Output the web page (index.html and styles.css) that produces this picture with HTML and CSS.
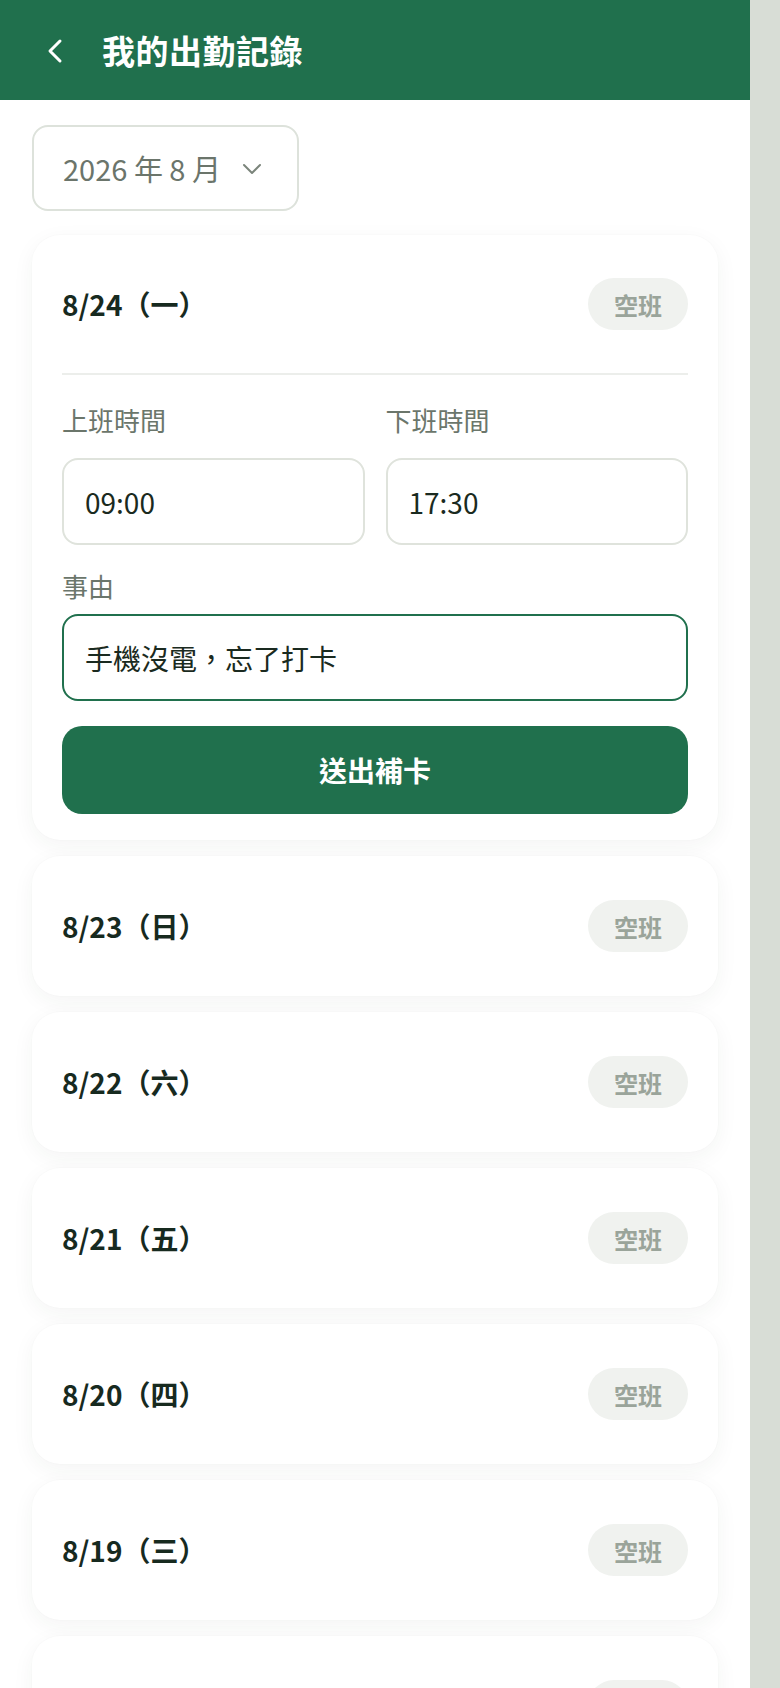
FILE: index.html
```html
<!DOCTYPE html>
<html lang="zh-Hant">
<head>
<meta charset="utf-8">
<title>我的出勤記錄</title>
<link rel="stylesheet" href="styles.css">
</head>
<body>
<div class="app">
  <header class="topbar">
    <button class="back" aria-label="返回">
      <svg width="18" height="26" viewBox="0 0 18 26"><polyline points="14,3 4,13 14,23" fill="none" stroke="#fff" stroke-width="3" stroke-linecap="round" stroke-linejoin="round"/></svg>
    </button>
    <h1 class="title">我的出勤記錄</h1>
  </header>

  <main class="content">
    <div class="month-select">
      <span>2026 年 8 月</span>
      <svg class="caret" width="20" height="12" viewBox="0 0 20 12"><polyline points="2,2 10,10 18,2" fill="none" stroke="#7b857b" stroke-width="2" stroke-linecap="round" stroke-linejoin="round"/></svg>
    </div>

    <section class="card open">
      <div class="card-head">
        <span class="date">8/24（一）</span>
        <span class="pill">空班</span>
      </div>
      <div class="card-body">
        <div class="time-grid">
          <div class="field">
            <div class="label time-label">上班時間</div>
            <div class="input">09:00</div>
          </div>
          <div class="field">
            <div class="label time-label">下班時間</div>
            <div class="input">17:30</div>
          </div>
        </div>
        <div class="label reason-label">事由</div>
        <div class="input focused">手機沒電，忘了打卡</div>
        <button class="submit">送出補卡</button>
      </div>
    </section>

    <section class="card"><div class="card-head"><span class="date">8/23（日）</span><span class="pill">空班</span></div></section>
    <section class="card"><div class="card-head"><span class="date">8/22（六）</span><span class="pill">空班</span></div></section>
    <section class="card"><div class="card-head"><span class="date">8/21（五）</span><span class="pill">空班</span></div></section>
    <section class="card"><div class="card-head"><span class="date">8/20（四）</span><span class="pill">空班</span></div></section>
    <section class="card"><div class="card-head"><span class="date">8/19（三）</span><span class="pill">空班</span></div></section>
    <section class="card"><div class="card-head"><span class="date">8/18（二）</span><span class="pill">空班</span></div></section>
    <section class="card"><div class="card-head"><span class="date">8/17（一）</span><span class="pill">空班</span></div></section>
  </main>
</div>
</body>
</html>
```

FILE: styles.css
```css
* { box-sizing: border-box; }

html, body {
  margin: 0;
  padding: 0;
}

body {
  background: #d8ddd6;
  font-family: "Noto Sans CJK TC", "Noto Sans", sans-serif;
  color: #1a2b20;
}

.app {
  width: 750px;
  min-height: 1688px;
  background: #ffffff;
}

.topbar {
  height: 100px;
  background: #20704d;
  display: flex;
  align-items: center;
  padding-left: 46px;
}

.back {
  background: none;
  border: 0;
  padding: 0;
  width: 18px;
  height: 26px;
  display: flex;
  margin-right: 38px;
  margin-top: 1px;
}

.title {
  margin: 0;
  color: #ffffff;
  font-size: 33px;
  font-weight: 700;
  line-height: 1;
  letter-spacing: 0.5px;
}

.content {
  padding: 25px 32px 0;
}

.month-select {
  width: 267px;
  height: 86px;
  border: 2px solid #dde2db;
  border-radius: 16px;
  display: flex;
  align-items: center;
  justify-content: space-between;
  padding: 0 35px 0 29px;
  color: #6b756b;
  font-size: 29px;
  margin-bottom: 24px;
}

.caret { margin-top: 2px; }

.card {
  background: #ffffff;
  border-radius: 28px;
  box-shadow: 0 6px 22px rgba(30, 50, 35, 0.05), 0 0 2px rgba(30, 50, 35, 0.03);
  padding: 0 30px;
  margin-bottom: 16px;
}

.card-head {
  height: 140px;
  display: flex;
  align-items: center;
  justify-content: space-between;
}

.card.open .card-head {
  border-bottom: 2px solid #eceeeb;
}

.date {
  font-size: 28px;
  font-weight: 700;
  color: #172a1f;
}

.pill {
  width: 100px;
  height: 52px;
  border-radius: 26px;
  background: #f0f2ef;
  color: #9aa49a;
  font-size: 24px;
  font-weight: 700;
  display: flex;
  align-items: center;
  justify-content: center;
}

.card-body {
  padding: 27px 0 26px;
}

.time-grid {
  display: grid;
  grid-template-columns: 1fr 1fr;
  column-gap: 21px;
  margin-bottom: 23px;
}

.label {
  font-size: 26px;
  line-height: 36px;
  color: #6b766b;
}

.time-label { margin-bottom: 20px; }
.reason-label { margin-bottom: 10px; }

.input {
  height: 87px;
  border: 2px solid #dfe3dc;
  border-radius: 16px;
  display: flex;
  align-items: center;
  padding: 0 21px;
  font-size: 28px;
  color: #1a2a20;
}

.input.focused {
  border-color: #20704d;
}

.submit {
  display: block;
  width: 100%;
  height: 88px;
  margin-top: 25px;
  border: 0;
  border-radius: 20px;
  background: #20704d;
  color: #ffffff;
  font-family: "Noto Sans CJK TC", "Noto Sans", sans-serif;
  font-size: 28px;
  font-weight: 700;
}
```
